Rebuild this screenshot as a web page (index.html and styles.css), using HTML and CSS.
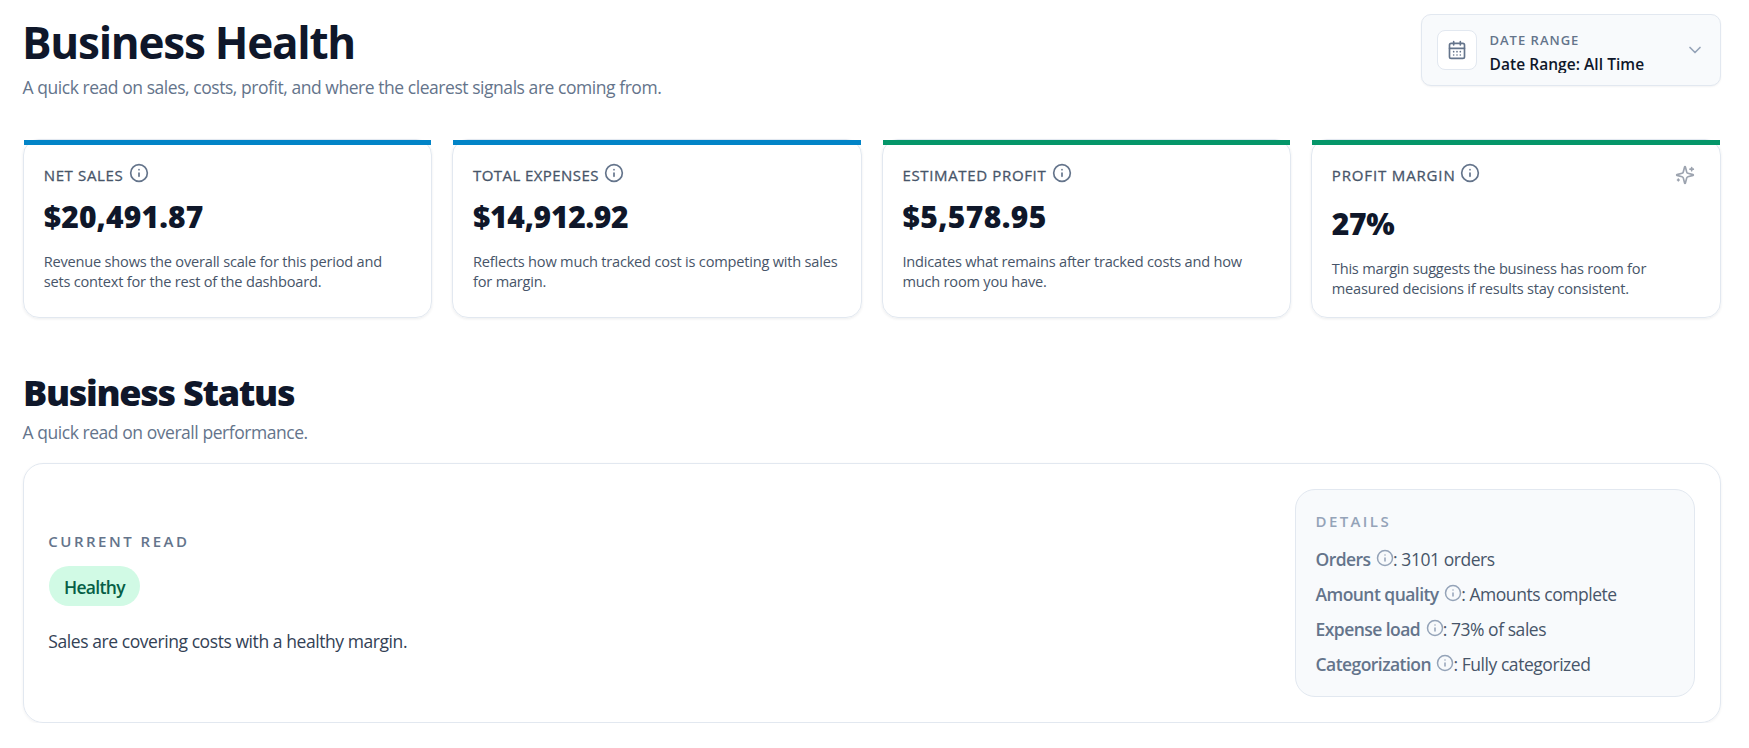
FILE: index.html
```html
<!DOCTYPE html>
<html lang="en">
<head>
<meta charset="UTF-8">
<meta name="viewport" content="width=device-width, initial-scale=1.0">
<title>Business Health</title>
<link rel="stylesheet" href="styles.css">
</head>
<body>
<svg class="symbols" aria-hidden="true">
  <symbol id="info" viewBox="0 0 24 24">
    <circle cx="12" cy="12" r="10"/>
    <path d="M12 16v-4M12 8h.01"/>
  </symbol>
</svg>

<main class="page">
  <header class="page-header">
    <div class="heading">
      <h1>Business Health</h1>
      <p class="subtitle">A quick read on sales, costs, profit, and where the clearest signals are coming from.</p>
    </div>
    <button class="date-range" type="button">
      <span class="date-icon">
        <svg class="icon icon-lg" viewBox="0 0 24 24">
          <path d="M8 2v4M16 2v4M3 10h18"/>
          <rect x="3" y="4" width="18" height="18" rx="2"/>
          <path d="M8 14h.01M12 14h.01M16 14h.01M8 18h.01M12 18h.01M16 18h.01"/>
        </svg>
      </span>
      <span class="date-text">
        <span class="date-label">DATE RANGE</span>
        <span class="date-value">Date Range: All Time</span>
      </span>
      <svg class="icon icon-lg chevron" viewBox="0 0 24 24"><path d="m6 9 6 6 6-6"/></svg>
    </button>
  </header>

  <section class="kpis">
    <article class="kpi blue">
      <div class="kpi-head">
        <span class="kpi-label">NET SALES</span>
        <svg class="icon icon-lg"><use href="#info"/></svg>
      </div>
      <div class="kpi-value">$20,491.87</div>
      <p class="kpi-note">Revenue shows the overall scale for this period and<br>sets context for the rest of the dashboard.</p>
    </article>
    <article class="kpi blue">
      <div class="kpi-head">
        <span class="kpi-label expenses">TOTAL EXPENSES</span>
        <svg class="icon icon-lg"><use href="#info"/></svg>
      </div>
      <div class="kpi-value tight">$14,912.92</div>
      <p class="kpi-note">Reflects how much tracked cost is competing with sales<br>for margin.</p>
    </article>
    <article class="kpi green">
      <div class="kpi-head">
        <span class="kpi-label">ESTIMATED PROFIT</span>
        <svg class="icon icon-lg"><use href="#info"/></svg>
      </div>
      <div class="kpi-value wide">$5,578.95</div>
      <p class="kpi-note">Indicates what remains after tracked costs and how<br>much room you have.</p>
    </article>
    <article class="kpi green">
      <div class="kpi-head has-action">
        <span class="kpi-label margin">PROFIT MARGIN</span>
        <svg class="icon icon-lg"><use href="#info"/></svg>
        <button class="spark" type="button">
          <svg class="icon icon-lg" viewBox="0 0 24 24">
            <path d="M9.937 15.5A2 2 0 0 0 8.5 14.063l-6.135-1.582a.5.5 0 0 1 0-.962L8.5 9.936A2 2 0 0 0 9.937 8.5l1.582-6.135a.5.5 0 0 1 .963 0L14.063 8.5A2 2 0 0 0 15.5 9.937l6.135 1.581a.5.5 0 0 1 0 .964L15.5 14.063a2 2 0 0 0-1.437 1.437l-1.582 6.135a.5.5 0 0 1-.963 0z"/>
            <path d="M20 3v4M22 5h-4M4 17v2M5 18H3"/>
          </svg>
        </button>
      </div>
      <div class="kpi-value tight">27%</div>
      <p class="kpi-note">This margin suggests the business has room for<br>measured decisions if results stay consistent.</p>
    </article>
  </section>

  <section class="status">
    <h2>Business Status</h2>
    <p class="subtitle">A quick read on overall performance.</p>
    <div class="status-card">
      <div class="current">
        <div class="eyebrow">CURRENT READ</div>
        <span class="pill">Healthy</span>
        <p class="summary">Sales are covering costs with a healthy margin.</p>
      </div>
      <div class="details">
        <div class="eyebrow muted">DETAILS</div>
        <ul>
          <li><strong>Orders</strong><svg class="icon"><use href="#info"/></svg><span>: 3101 orders</span></li>
          <li><strong>Amount quality</strong><svg class="icon"><use href="#info"/></svg><span>: Amounts complete</span></li>
          <li><strong>Expense load</strong><svg class="icon"><use href="#info"/></svg><span>: 73% of sales</span></li>
          <li><strong>Categorization</strong><svg class="icon"><use href="#info"/></svg><span>: Fully categorized</span></li>
        </ul>
      </div>
    </div>
  </section>
</main>
</body>
</html>
```
FILE: styles.css
```css
* {
  box-sizing: border-box;
}
body {
  margin: 0;
  background: #fff;
  color: #0f172a;
  font-family: "Segoe UI", "Open Sans", sans-serif;
}
h1, h2, p, ul {
  margin: 0;
  padding: 0;
}
button {
  font: inherit;
  color: inherit;
}
.symbols {
  display: none;
}
.page {
  padding: 14px 28.5px 0 23px;
}

.icon {
  width: 18px;
  height: 18px;
  flex: none;
  fill: none;
  stroke: currentColor;
  stroke-width: 2;
  stroke-linecap: round;
  stroke-linejoin: round;
}
.icon-lg {
  width: 20px;
  height: 20px;
}

/* header */
.page-header {
  display: flex;
  justify-content: space-between;
  align-items: flex-start;
  margin-bottom: 38px;
}
.heading {
  padding-top: 4px;
}
h1 {
  font-size: 44px;
  line-height: 48px;
  font-weight: 700;
  letter-spacing: -1.24px;
  margin-bottom: 7px;
  margin-left: -1px;
}
.subtitle {
  margin-left: -0.5px;
  font-size: 17.5px;
  line-height: 28px;
  letter-spacing: -0.45px;
  color: #64748b;
}
.date-range {
  display: flex;
  align-items: flex-start;
  width: 299.5px;
  height: 72px;
  padding: 15px;
  background: #f8fafc;
  border: 1px solid #e2e8f0;
  border-radius: 10px;
  box-shadow: 0 1px 2px rgba(15, 23, 42, 0.05);
  text-align: left;
}
.date-icon {
  display: flex;
  align-items: center;
  justify-content: center;
  width: 40px;
  height: 40px;
  background: #fff;
  border: 1px solid #e2e8f0;
  border-radius: 8px;
  color: #64748b;
}
.date-text {
  flex: 1;
  margin-left: 12.5px;
  padding-top: 2px;
}
.date-label {
  display: block;
  font-size: 13px;
  line-height: 16px;
  font-weight: 600;
  letter-spacing: 1px;
  color: #64748b;
}
.date-value {
  display: block;
  height: 19px;
  margin-top: 6px;
  overflow: hidden;
  font-size: 15.5px;
  line-height: 21px;
  font-weight: 600;
  letter-spacing: 0.05px;
}
.chevron {
  margin-top: 10px;
  color: #94a3b8;
}

/* kpi cards */
.kpis {
  display: grid;
  grid-template-columns: repeat(4, 1fr);
  gap: 20px;
  margin-bottom: 53px;
}
.kpi {
  position: relative;
  padding: 23px 12px 19px 19.7px;
  border: 1px solid #e2e8f0;
  border-radius: 16px;
  box-shadow: 0 1px 3px rgba(15, 23, 42, 0.08);
}
.kpi::before {
  content: "";
  position: absolute;
  top: 0;
  left: 0;
  right: 0;
  height: 5px;
}
.kpi.blue::before {
  background: #0284c7;
}
.kpi.green::before {
  background: #059669;
}
.kpi-head {
  display: flex;
  align-items: flex-start;
  height: 22px;
  color: #64748b;
}
.kpi-head.has-action {
  height: 29px;
}
.kpi-label {
  margin: 2px 5.5px 0 0;
  font-size: 15px;
  line-height: 20px;
  font-weight: 500;
  letter-spacing: 0.65px;
  color: #475569;
  -webkit-text-stroke: 0.3px #475569; /* medium weight */
}
.kpi-label.expenses {
  letter-spacing: 0.42px;
}
.kpi-label.margin {
  margin-right: 4px;
  letter-spacing: 0.85px;
}
.spark {
  display: flex;
  align-items: center;
  justify-content: center;
  width: 28px;
  height: 28px;
  margin: -2px 9px 0 auto;
  padding: 0;
  border: 0;
  background: none;
  color: #9ca3af;
}
.kpi-value {
  margin-top: 13.5px;
  font-size: 30px;
  line-height: 36px;
  font-weight: 800;
  letter-spacing: 0.15px;
}
.kpi-value.tight {
  letter-spacing: -0.3px;
}
.kpi-value.wide {
  letter-spacing: 0.4px;
}
.kpi-note {
  margin-top: 16px;
  font-size: 14.6px;
  line-height: 20px;
  letter-spacing: -0.21px;
  color: #475569;
  white-space: nowrap;
}

/* business status */
h2 {
  font-size: 36px;
  line-height: 44px;
  font-weight: 800;
  letter-spacing: -1.3px;
  margin-bottom: 3px;
}
.status-card {
  display: flex;
  justify-content: space-between;
  align-items: center;
  margin-top: 17.5px;
  padding: 25px;
  border: 1px solid #e2e8f0;
  border-radius: 20px;
  box-shadow: 0 1px 3px rgba(15, 23, 42, 0.06);
}
.eyebrow {
  font-size: 15px;
  line-height: 20px;
  font-weight: 600;
  letter-spacing: 2.5px;
  color: #64748b;
}
.current .eyebrow,
.summary {
  margin-left: -0.7px;
}
.eyebrow.muted {
  letter-spacing: 2.4px;
  color: #94a3b8;
}
.pill {
  display: block;
  width: 91px;
  height: 40px;
  margin: 15px 0 21px;
  border-radius: 20px;
  background: #d1fae5;
  color: #065f46;
  font-size: 17.5px;
  line-height: 42px;
  font-weight: 600;
  letter-spacing: -0.65px;
  text-align: center;
}
.summary {
  font-size: 17.5px;
  line-height: 28px;
  letter-spacing: -0.43px;
  color: #334155;
}
.details {
  width: 400px;
  padding: 21px 20px 18px;
  background: #f8fafc;
  border: 1px solid #e2e8f0;
  border-radius: 20px;
}
.details ul {
  display: grid;
  gap: 7px;
  margin-top: 14px;
  list-style: none;
}
.details li {
  display: flex;
  font-size: 17.5px;
  line-height: 28px;
  letter-spacing: -0.45px;
  color: #475569;
}
.details strong {
  font-weight: 600;
  letter-spacing: -0.55px;
  color: #64748b;
}
.details .icon {
  margin: 4px -1px 0 5.5px;
  color: #94a3b8;
}
```
